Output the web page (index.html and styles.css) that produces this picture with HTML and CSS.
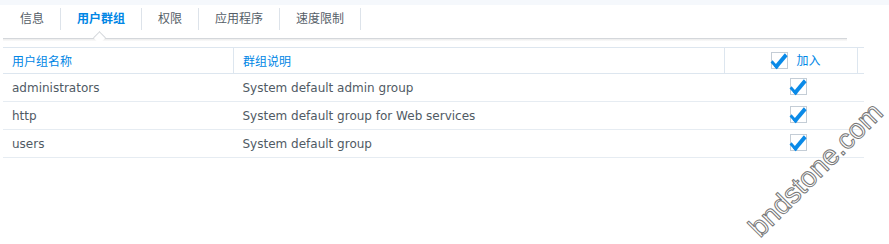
FILE: index.html
```html
<!DOCTYPE html>
<html lang="zh-CN">
<head>
    <meta charset="UTF-8">
    <title>用户群组</title>
    <link rel="stylesheet" href="styles.css">
</head>
<body>
    <div class="top-strip"></div>
    <div class="tabs">
        <div class="tab">信息</div>
        <div class="tab active">用户群组</div>
        <div class="tab">权限</div>
        <div class="tab">应用程序</div>
        <div class="tab">速度限制</div>
    </div>
    <div class="tab-line"><span class="caret"></span></div>

    <table class="grid">
        <thead>
            <tr>
                <th class="col-name">用户组名称</th>
                <th class="col-desc">群组说明</th>
                <th class="col-join"><span class="check"></span>加入</th>
                <th class="col-end"></th>
            </tr>
        </thead>
        <tbody>
            <tr>
                <td>administrators</td>
                <td>System default admin group</td>
                <td class="col-join"><span class="check"></span></td>
                <td class="col-end"></td>
            </tr>
            <tr>
                <td>http</td>
                <td>System default group for Web services</td>
                <td class="col-join"><span class="check"></span></td>
                <td class="col-end"></td>
            </tr>
            <tr>
                <td>users</td>
                <td>System default group</td>
                <td class="col-join"><span class="check"></span></td>
                <td class="col-end"></td>
            </tr>
        </tbody>
    </table>

    <div class="watermark">bndstone.com</div>
</body>
</html>
```

FILE: styles.css
```css
body {
    margin: 0;
    width: 889px;
    height: 244px;
    background: #fff;
    font-family: "DejaVu Sans", "Noto Sans CJK SC", sans-serif;
    font-size: 12px;
    color: #505a64;
    position: relative;
    overflow: hidden;
}
.top-strip {
    height: 5px;
    background: #f5f8fc;
}
.tabs {
    display: flex;
    height: 28px;
    margin-left: 3px;
    padding-top: 3px;
}
.tab {
    padding: 0 16px;
    line-height: 22px;
    border-right: 1px solid #dde3ea;
    font-size: 12px;
    color: #555e68;
    height: 22px;
}
.tab:first-child {
    padding-left: 17px;
}
.tab.active {
    color: #0086e5;
    font-weight: bold;
}
.tab-line {
    position: relative;
    margin: 2px 42px 0 3px;
    height: 2px;
    border-top: 1px solid #d4d7db;
    background: linear-gradient(#ececec, #fafafa);
}
.caret {
    position: absolute;
    left: 92px;
    top: -6px;
    width: 8px;
    height: 8px;
    background: #fff;
    border-left: 1px solid #d4d7db;
    border-top: 1px solid #d4d7db;
    transform: rotate(45deg);
}
.grid {
    margin: 6px 0 0 3px;
    width: 859px;
    border-collapse: collapse;
    table-layout: fixed;
}
.grid th,
.grid td {
    height: 27px;
    padding: 0 0 0 9px;
    text-align: left;
    border-bottom: 1px solid #e6ecf2;
    white-space: nowrap;
}
.grid th {
    height: 25px;
    font-weight: normal;
    color: #0086e5;
    border-top: 1px solid #dde6ef;
    border-right: 1px solid #dde6ef;
    border-bottom-color: #dde6ef;
}
.grid th.col-end {
    border-right: none;
}
.col-name { width: 221px; }
.col-desc { width: 481px; }
.col-join { width: 122px; }
.col-end { width: 6px; }
.grid .col-join {
    text-align: center;
    padding: 0 0 0 14px;
}
.grid th.col-join {
    padding-left: 10px;
}
.grid .col-end {
    padding: 0;
}
.grid th.col-join .check {
    margin-right: 8px;
}
.check {
    display: inline-block;
    width: 15px;
    height: 15px;
    border: 1px solid #c4cdd6;
    background: #fff;
    vertical-align: middle;
    position: relative;
    top: -1px;
}
.check::after {
    content: "";
    position: absolute;
    left: 1px;
    top: 4px;
    width: 14px;
    height: 5px;
    border-left: 3px solid #0a8ae8;
    border-bottom: 4px solid #0a8ae8;
    transform: rotate(-50deg) skewX(-8deg);
    transform-origin: 30% 70%;
}
.watermark {
    position: absolute;
    left: 728px;
    top: 154px;
    font-family: "Liberation Sans", sans-serif;
    font-size: 28px;
    line-height: 32px;
    color: #fff;
    -webkit-text-stroke: 1px #777;
    transform: rotate(-45deg);
}
```
